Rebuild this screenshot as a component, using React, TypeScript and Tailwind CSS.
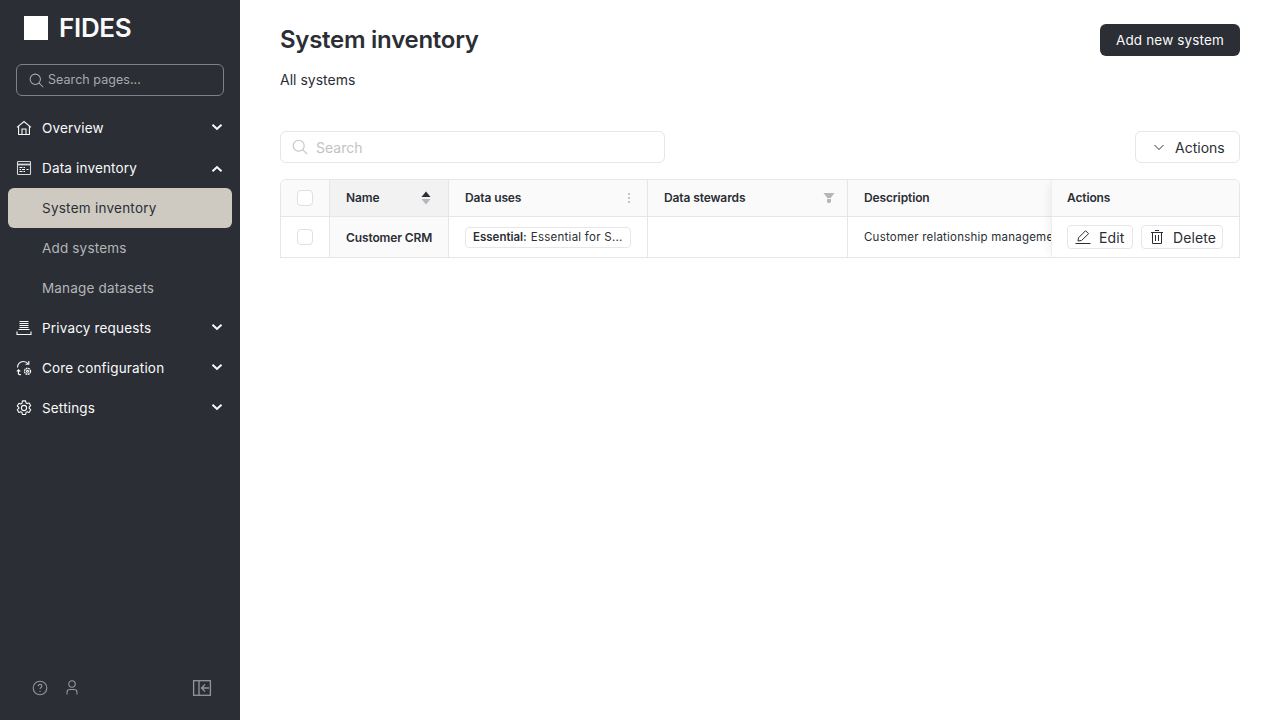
import React from "react";

const font = { fontFamily: 'Inter, "Noto Sans", sans-serif' };

function Chevron({ up }: { up?: boolean }) {
  return (
    <svg width="12" height="8" viewBox="0 0 12 8" className={up ? "mr-[1px] mt-[2px]" : "mb-[2px] mr-[1px]"}>
      <path d={up ? "M1.5 6.2 6 2l4.5 4.2" : "M1.5 1.8 6 6l4.5-4.2"} fill="none" stroke="#fafafa" strokeWidth="2" />
    </svg>
  );
}

function SearchIcon({ color, size = 16 }: { color: string; size?: number }) {
  return (
    <svg width={size} height={size} viewBox="0 0 16 16" fill="none" stroke={color} strokeWidth="1.1">
      <circle cx="6.7" cy="6.7" r="5.5" />
      <path d="M10.6 10.6 15.2 15.2" />
    </svg>
  );
}

const HomeIcon = (
  <svg width="16" height="16" viewBox="0 0 16 16" fill="none" stroke="#fafafa" strokeWidth="1.1">
    <path d="M1 7.4 8 1.5l7 5.9M2.6 6.2V14.5h10.8V6.2" />
    <path d="M6 14.5V9h4v5.5" />
  </svg>
);
const InventoryIcon = (
  <svg width="16" height="16" viewBox="0 0 16 16" fill="none" stroke="#d8d8d8" strokeWidth="1.1">
    <rect x="1.5" y="1.5" width="13" height="13" rx="0.8" />
    <path d="M1.5 4.5h13" strokeWidth="1.8" />
    <path d="M3.5 7.5h3M7.5 7.5h1.5M3.5 9.5h1.5M6 9.5h3M3.5 11.5h3M7.5 11.5h1.5M10.5 9.5h2" stroke="#fafafa" />
  </svg>
);
const RequestsIcon = (
  <svg width="16" height="16" viewBox="0 0 16 16" fill="none" stroke="#fafafa" strokeWidth="1.1">
    <path d="M3.5 1.5h9M3.5 3.5h9M3.5 5.5h9M3.5 7.5h9M2.5 9.5h11" />
    <path d="M1 11.5v3h14v-3" />
  </svg>
);
const CoreIcon = (
  <svg width="16" height="16" viewBox="0 0 16 16" fill="none" stroke="#fafafa" strokeWidth="1.1">
    <path d="M1.5 7.5C1.5 4 4 1.5 7.3 1.5c2.2 0 3.9.8 5 2.5M12.8 1v3.3H9.5" />
    <path d="M.8 11.5l1.6-1.8 1.8 1.8M2.4 10.2V14c.8.6 1.6.8 2.6.8" />
    <circle cx="11.5" cy="11.3" r="3" strokeDasharray="1.8 .6" strokeWidth="1.4" />
    <circle cx="11.5" cy="11.3" r="1" />
  </svg>
);
const GearIcon = (
  <svg width="16" height="16" viewBox="0 0 16 16" fill="none" stroke="#fafafa" strokeWidth="1.1">
    <path d="M6.4.9h3.2l.4 2 1.2.7 1.9-.7 1.6 2.8-1.5 1.3v1.4l1.5 1.3-1.6 2.8-1.9-.7-1.2.7-.4 2H6.4l-.4-2-1.2-.7-1.9.7-1.6-2.8 1.5-1.3V7.3L1.3 6l1.6-2.8 1.9.7L6 3.2z" strokeLinejoin="round" />
    <circle cx="8" cy="8" r="2.6" />
  </svg>
);

function NavItem({ icon, label, open }: { icon: React.ReactNode; label: string; open?: boolean }) {
  return (
    <div className="flex h-10 items-center pl-[16px] pr-[16px] text-[#fafafa]">
      <span className="mr-[10px] flex h-4 w-4 items-center justify-center">{icon}</span>
      <span className="flex-1 text-[13.5px] tracking-[0.17px]">{label}</span>
      <Chevron up={open} />
    </div>
  );
}

function SubItem({ label, active }: { label: string; active?: boolean }) {
  return (
    <div
      className={
        active
          ? "mx-2 flex h-10 items-center rounded-md bg-[#cecac2] pl-[34px] text-[13.5px] tracking-[0.25px] text-[#2b2e35]"
          : "mx-2 flex h-10 items-center pl-[34px] text-[13.5px] tracking-[0.17px] text-[#b4b6b9]"
      }
    >
      {label}
    </div>
  );
}

function Sidebar() {
  return (
    <aside className="flex h-full w-[240px] shrink-0 flex-col bg-[#2b2e35]">
      <div className="flex h-[64px] items-start pl-6 pt-4">
        <div className="h-6 w-6 bg-white" />
        <span className="ml-[11px] text-[26px] font-semibold leading-6 tracking-[-0.3px] text-[#fafafa]">FIDES</span>
      </div>
      <div className="mx-4 flex h-8 items-center rounded-md border border-[#7f8288] pl-[12px]">
        <SearchIcon color="#a8aaad" size={15} />
        <span className="ml-[4px] pt-[1px] text-[12.5px] tracking-[0.05px] text-[#a8aaad]">Search pages...</span>
      </div>
      <nav className="mt-3 flex flex-col">
        <NavItem icon={HomeIcon} label="Overview" />
        <NavItem icon={InventoryIcon} label="Data inventory" open />
        <SubItem label="System inventory" active />
        <SubItem label="Add systems" />
        <SubItem label="Manage datasets" />
        <NavItem icon={RequestsIcon} label="Privacy requests" />
        <NavItem icon={CoreIcon} label="Core configuration" />
        <NavItem icon={GearIcon} label="Settings" />
      </nav>
      <div className="mt-auto flex h-[64px] items-start pl-[32px] pr-[28px] pt-[24px]">
        <svg width="16" height="16" viewBox="0 0 16 16" fill="none" stroke="#93969a" strokeWidth="1.1">
          <circle cx="8" cy="8" r="6.8" />
          <path d="M6.2 6.2C6.2 5.1 7 4.4 8 4.4s1.9.7 1.9 1.7c0 1.4-1.9 1.4-1.9 3" />
          <circle cx="8" cy="11.4" r=".7" fill="#93969a" stroke="none" />
        </svg>
        <svg width="16" height="16" viewBox="0 0 16 16" fill="none" stroke="#93969a" strokeWidth="1.1" className="ml-4">
          <circle cx="8" cy="4" r="3.2" />
          <path d="M3 14.5v-2.2c0-1.5 1.2-2.8 2.8-2.8h4.4c1.6 0 2.8 1.3 2.8 2.8v2.2" />
        </svg>
        <svg width="20" height="16" viewBox="0 0 20 16" fill="none" stroke="#93969a" strokeWidth="1.3" className="ml-auto">
          <rect x="1.6" y=".7" width="16.8" height="14.6" />
          <path d="M7 .7v14.6" />
          <path d="M17 8h-7M13 4.5 9.5 8l3.5 3.5" />
        </svg>
      </div>
    </aside>
  );
}

const headerCell = "flex h-full items-center border-r border-[#e6e6e8] bg-[#fafafa] pl-4 text-[12px] tracking-[-0.12px] font-semibold text-[#2b2e35]";
const bodyCell = "flex h-full items-center border-r border-[#e6e6e8] pl-4 text-[12px] tracking-[-0.12px] text-[#2b2e35]";
const checkbox = "h-4 w-4 rounded-[4px] border border-[#e0e0e2] bg-white";

function Table() {
  return (
    <div className="relative mt-4 overflow-hidden rounded-t-md border-x border-t border-[#e6e6e8]">
      <div className="flex h-[37px] border-b border-[#e6e6e8]">
        <div className={headerCell + " w-[49px] shrink-0 justify-center !pl-0"}>
          <div className={checkbox} />
        </div>
        <div className={headerCell + " w-[119px] shrink-0 justify-between !bg-[#f2f2f2] pr-[17px]"}>
          <span>Name</span>
          <svg width="10" height="16" viewBox="0 0 10 16">
            <path d="M5 1.5 9.5 7H.5z" fill="#2b2e35" />
            <path d="M5 14.5 9.5 9H.5z" fill="#b5b6b9" />
          </svg>
        </div>
        <div className={headerCell + " w-[199px] shrink-0 justify-between pr-[16px]"}>
          <span>Data uses</span>
          <svg width="4" height="12" viewBox="0 0 4 12" fill="#c4c4c6">
            <rect x="1" y="1" width="2" height="2" />
            <rect x="1" y="5" width="2" height="2" />
            <rect x="1" y="9" width="2" height="2" />
          </svg>
        </div>
        <div className={headerCell + " w-[200px] shrink-0 justify-between pr-[12px]"}>
          <span>Data stewards</span>
          <svg width="12" height="12" viewBox="0 0 12 12" fill="#b5b6b9">
            <path d="M.5 1h11L8 5.4V6H4v-.6z" />
            <rect x="4" y="7" width="4" height="3" />
            <rect x="4.6" y="10" width="2.8" height="1" />
          </svg>
        </div>
        <div className={headerCell + " flex-1 !border-r-0"}>Description</div>
      </div>
      <div className="flex h-[41px] border-b border-[#e6e6e8]">
        <div className={bodyCell + " w-[49px] shrink-0 justify-center !pl-0"}>
          <div className={checkbox} />
        </div>
        <div className={bodyCell + " w-[119px] shrink-0 bg-[#fafafa] pt-[1px] font-semibold"}>Customer CRM</div>
        <div className={bodyCell + " w-[199px] shrink-0"}>
          <div className="flex h-[21px] w-[166px] items-center whitespace-nowrap rounded-[4px] border border-[#e6e6e8] pl-[7px] pt-[1px] text-[11.5px] tracking-[0px]">
            <span className="font-semibold">Essential:</span>
            <span className="ml-[4px] tracking-[0.25px]">Essential for S...</span>
          </div>
        </div>
        <div className={bodyCell + " w-[200px] shrink-0"} />
        <div className={bodyCell + " min-w-0 flex-1 overflow-hidden whitespace-nowrap !border-r-0 pt-[1px] !text-[11.5px] !tracking-[0.22px]"}>
          Customer relationship management
        </div>
      </div>
      <div className="absolute right-0 top-0 w-[188px] bg-white shadow-[-6px_0_8px_-4px_rgba(0,0,0,0.06)] before:absolute before:left-0 before:top-0 before:h-full before:w-px before:bg-[#eeeeef]">
        <div className="flex h-[37px] items-center border-b border-[#e6e6e8] bg-[#fafafa] pl-4 text-[12px] font-semibold tracking-[-0.12px] text-[#2b2e35]">
          Actions
        </div>
        <div className="flex h-[41px] items-center gap-2 border-b border-[#e6e6e8] pl-4">
          <div className="flex h-6 w-[66px] items-center rounded-[4px] border border-[#e6e6e8] pl-[7px] text-[14px] tracking-[0.1px] text-[#2b2e35]">
            <svg width="16" height="16" viewBox="0 0 16 16" fill="none" stroke="#2b2e35" strokeWidth="1">
              <path d="M.5 14.5h15" />
              <path d="M3 12l.5-3.2L10.6 1.7l3 3L6.5 11.5z" strokeLinejoin="round" />
            </svg>
            <span className="ml-[8px]">Edit</span>
          </div>
          <div className="flex h-6 w-[82px] items-center rounded-[4px] border border-[#e6e6e8] pl-[7px] text-[14px] tracking-[0.1px] text-[#2b2e35]">
            <svg width="16" height="16" viewBox="0 0 16 16" fill="none" stroke="#2b2e35" strokeWidth="1">
              <path d="M2 3.5h12M6 1.5h4M3.5 3.5v11h9v-11M6.5 6v6M9.5 6v6" />
            </svg>
            <span className="ml-[8px]">Delete</span>
          </div>
        </div>
      </div>
    </div>
  );
}

export default function App() {
  return (
    <div className="flex h-[720px] w-[1280px] overflow-hidden bg-white" style={font}>
      <Sidebar />
      <main className="flex-1 px-10 pt-6">
        <div className="flex items-start justify-between">
          <h1 className="mt-[1px] text-[24px] font-semibold leading-[30px] tracking-[-0.27px] text-[#2b2e35]">System inventory</h1>
          <div className="flex h-8 w-[140px] items-center justify-center rounded-md bg-[#2b2e35] text-[13.5px] tracking-[0.15px] text-[#fafafa]">
            Add new system
          </div>
        </div>
        <p className="mt-[13px] h-[22px] text-[14px] leading-[22px] text-[#2b2e35]">All systems</p>
        <div className="mt-[40px] flex items-center justify-between">
          <div className="flex h-8 w-[385px] items-center rounded-md border border-[#e6e6e8] pl-[11px]">
            <SearchIcon color="#c2c3c5" />
            <span className="ml-[8px] text-[14px] text-[#c2c3c5]">Search</span>
          </div>
          <div className="flex h-8 w-[105px] items-center rounded-md border border-[#e6e6e8] pl-[17px] text-[14px] text-[#2b2e35]">
            <svg width="12" height="12" viewBox="0 0 12 12" fill="none" stroke="#2b2e35" strokeWidth="1">
              <path d="M1.5 4 6 8.5 10.5 4" />
            </svg>
            <span className="ml-[10px]">Actions</span>
          </div>
        </div>
        <Table />
      </main>
    </div>
  );
}
